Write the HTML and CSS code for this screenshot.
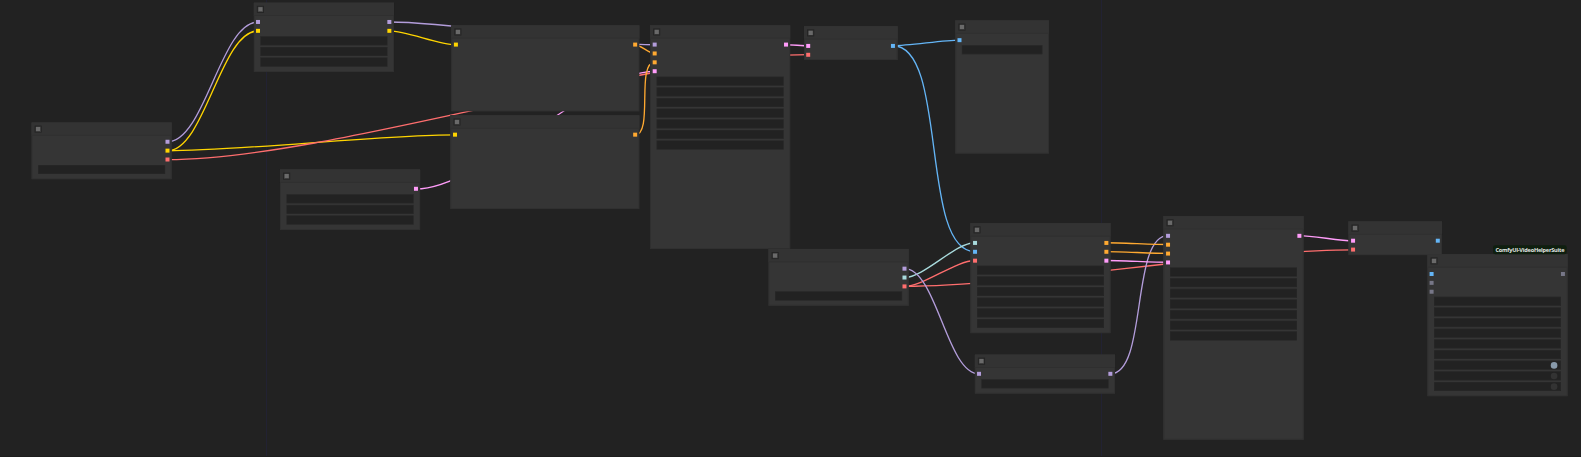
FILE: index.html
```
<!DOCTYPE html>
<html lang="en">
<head>
<meta charset="utf-8">
<title>ComfyUI</title>
<link rel="stylesheet" href="styles.css">
</head>
<body>
<main class="canvas">
  <svg class="links" id="links" width="1581" height="457" viewBox="0 0 1581 457"></svg>
  <div class="world" id="world"></div>
</main>
<script src="graph.js"></script>
</body>
</html>
```
FILE: styles.css
```
* { box-sizing: border-box; }
body { margin: 0; background: #222; overflow: hidden; }
.canvas {
  position: relative;
  width: 1581px;
  height: 457px;
  overflow: hidden;
  background: #222;
  border-bottom: 1px solid #1d1d1d;
}
.canvas::before, .canvas::after {
  content: "";
  position: absolute;
  top: 0;
  bottom: 0;
  left: 266px;
  width: 1px;
  background: #222233;
}
.canvas::after { left: 1101px; }
.links { position: absolute; left: 0; top: 0; z-index: 1; }
.links path { fill: none; stroke-width: 1.33; }
/* graph units, scaled by the zoom level */
.world {
  position: absolute;
  left: 0;
  top: 0;
  z-index: 2;
  width: 3563px;
  height: 1030px;
  transform: scale(0.4437);
  transform-origin: 0 0;
}
.node { position: absolute; background: #353535; box-shadow: inset 0 0 0 2px #303030; }
.title {
  height: 30px;
  display: flex;
  align-items: center;
  padding: 2px 0 0 9px;
  background: #333;
  border-bottom: 2px solid #303030;
}
.box { width: 12px; height: 12px; background: #6a6a6a; border: 1px solid #222; outline: 2px solid #242424; }
.slots { display: flex; justify-content: space-between; padding: 4px 5.5px 0; margin-bottom: 2px; }
.slots div { display: flex; flex-direction: column; }
.slot { width: 9px; height: 9px; margin: 5.5px 0; }
.widgets { display: grid; gap: 4px; padding: 0 15px; }
.widget {
  height: 20px;
  background: #222;
  border: 1px solid #2b2b2b;
  display: flex;
  align-items: center;
  justify-content: flex-end;
  padding-right: 7px;
}
.toggle { width: 15px; height: 15px; border-radius: 50%; background: #333; }
.toggle.on { background: #8899aa; }
.badge {
  position: absolute;
  right: 2px;
  top: -20px;
  height: 20px;
  padding: 0 5px;
  border-radius: 5px;
  background: #0f1f0f;
  color: #e4e8e4;
  font: bold 12.6px/20px "Open Sans", sans-serif;
  letter-spacing: -0.5px;
  white-space: nowrap;
}
```
FILE: graph.js
```
const SCALE = 0.4437;
const COLORS = {
  model: "#b39ddb", clip: "#ffd500", vae: "#ff6e6e", latent: "#ff9cf9",
  cond: "#ffa931", image: "#64b5f6", vision: "#a8dadc", any: "#777788"
};

// x, y: screen position of the title corner; w, h: body size in graph units
const nodes = {
  ckpt:    { x: 31.6, y: 122.4, w: 315, h: 98, outs: ["model", "clip", "vae"], widgets: 1 },
  lora:    { x: 253.7, y: 2.5, w: 315, h: 126, ins: ["model", "clip"], outs: ["model", "clip"], widgets: 3 },
  latent:  { x: 280, y: 169.4, w: 315, h: 106, outs: ["latent"], widgets: 3 },
  pos:     { x: 451.3, y: 25.2, w: 423, h: 164, ins: ["clip"], outs: ["cond"] },
  neg:     { x: 450.4, y: 115.3, w: 425, h: 181, ins: ["clip"], outs: ["cond"] },
  sampler: { x: 650.1, y: 25.2, w: 315, h: 474, ins: ["model", "cond", "cond", "latent"], outs: ["latent"], widgets: 7 },
  decode:  { x: 803.8, y: 26.2, w: 210, h: 46, ins: ["latent", "vae"], outs: ["image"] },
  save:    { x: 955.2, y: 20.6, w: 210, h: 270, ins: ["image"], widgets: 1 },
  svdckpt: { x: 768.7, y: 249.1, w: 315, h: 98, outs: ["model", "vision", "vae"], widgets: 1 },
  svd:     { x: 970.4, y: 223.2, w: 315, h: 218, ins: ["vision", "image", "vae"], outs: ["cond", "cond", "latent"], widgets: 6 },
  cfg:     { x: 974.6, y: 354.4, w: 315, h: 58, ins: ["model"], outs: ["model"], widgets: 1 },
  sampler2:{ x: 1163.5, y: 216.1, w: 315, h: 474, ins: ["model", "cond", "cond", "latent"], outs: ["latent"], widgets: 7 },
  decode2: { x: 1348.6, y: 221.4, w: 210, h: 46, ins: ["latent", "vae"], outs: ["image"] },
  combine: { x: 1427.2, y: 254.3, w: 315, h: 290, ins: ["image", "any", "any"], outs: ["any"], widgets: 9,
             toggles: { 6: true, 7: false, 8: false }, badge: "ComfyUI-VideoHelperSuite" }
};

const links = [
  ["ckpt", 0, "lora", 0], ["ckpt", 1, "lora", 1], ["ckpt", 1, "neg", 0], ["ckpt", 2, "decode", 1],
  ["lora", 0, "sampler", 0], ["lora", 1, "pos", 0], ["latent", 0, "sampler", 3],
  ["pos", 0, "sampler", 1], ["neg", 0, "sampler", 2], ["sampler", 0, "decode", 0],
  ["decode", 0, "save", 0], ["decode", 0, "svd", 1],
  ["svdckpt", 1, "svd", 0], ["svdckpt", 2, "svd", 2], ["svdckpt", 2, "decode2", 1], ["svdckpt", 0, "cfg", 0],
  ["cfg", 0, "sampler2", 0], ["svd", 0, "sampler2", 1], ["svd", 1, "sampler2", 2], ["svd", 2, "sampler2", 3],
  ["sampler2", 0, "decode2", 0], ["decode2", 0, "combine", 0]
];

function el(cls, parent) {
  const e = document.createElement("div");
  e.className = cls;
  parent.appendChild(e);
  return e;
}

const world = document.getElementById("world");
for (const n of Object.values(nodes)) {
  const node = el("node", world);
  node.style.left = n.x / SCALE + "px";
  node.style.top = n.y / SCALE + "px";
  node.style.width = n.w + 1 + "px";
  node.style.height = n.h + 30 + "px";
  el("box", el("title", node));
  const slots = el("slots", node);
  for (const side of [n.ins, n.outs]) {
    const col = el("column", slots);
    for (const type of side || []) el("slot", col).style.background = COLORS[type];
  }
  if (n.widgets) {
    const list = el("widgets", node);
    for (let i = 0; i < n.widgets; i++) {
      const w = el("widget", list);
      if (n.toggles && i in n.toggles) el(n.toggles[i] ? "toggle on" : "toggle", w);
    }
  }
  if (n.badge) el("badge", node).textContent = n.badge;
}

const slotY = (n, i) => n.y + (30 + 14 + 20 * i) * SCALE;
const svg = document.getElementById("links");
for (const [from, out, to, inp] of links) {
  const a = nodes[from], b = nodes[to];
  const x1 = a.x + (a.w - 9) * SCALE, y1 = slotY(a, out);
  const x2 = b.x + 10 * SCALE, y2 = slotY(b, inp);
  const k = Math.hypot(x2 - x1, y2 - y1) * 0.25;
  const p = document.createElementNS("http://www.w3.org/2000/svg", "path");
  p.setAttribute("d", `M${x1} ${y1} C${x1 + k} ${y1} ${x2 - k} ${y2} ${x2} ${y2}`);
  p.setAttribute("stroke", COLORS[a.outs[out]]);
  svg.appendChild(p);
}
```
